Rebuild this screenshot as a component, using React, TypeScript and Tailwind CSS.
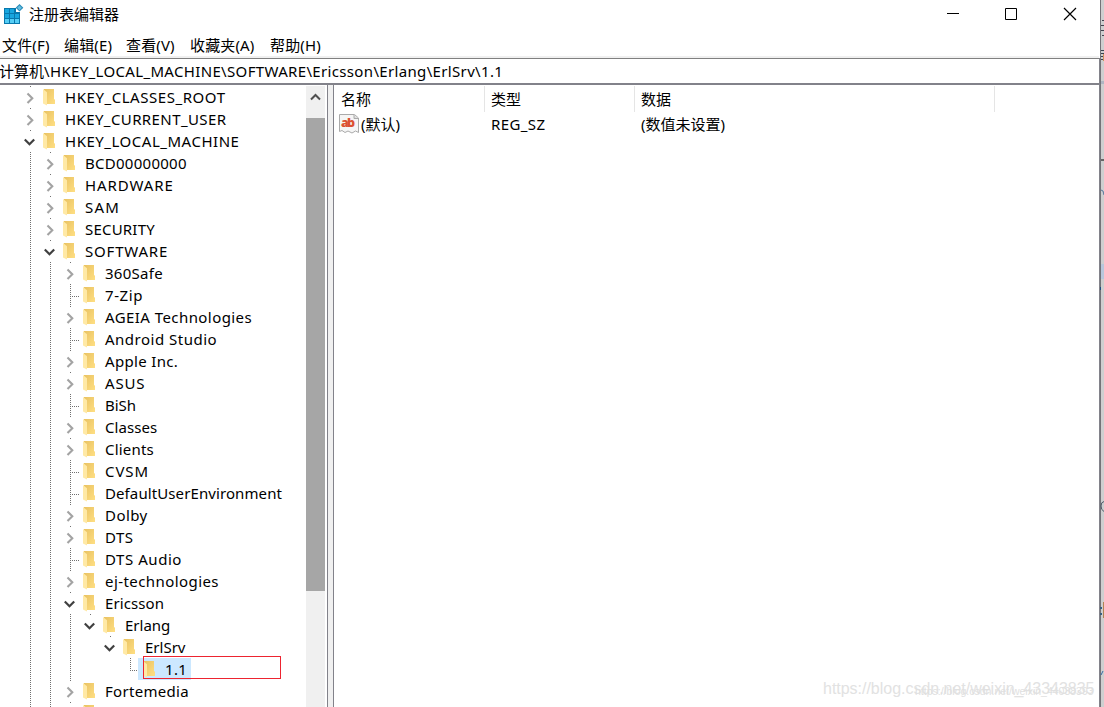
import React from "react";

type Guide = "line" | "none";
type Kind = "closed" | "open" | "leaf" | "last";
type RowData = { name: string; guides: Guide[]; kind: Kind; track?: string; selected?: boolean };

const L1: Guide[] = ["line"];
const L2: Guide[] = ["line", "line"];

const rows: RowData[] = [
  { name: "HKEY_CLASSES_ROOT", guides: [], kind: "closed", track: "tracking-[0.55px]" },
  { name: "HKEY_CURRENT_USER", guides: [], kind: "closed", track: "tracking-[0.4px]" },
  { name: "HKEY_LOCAL_MACHINE", guides: [], kind: "open", track: "tracking-[0.52px]" },
  { name: "BCD00000000", guides: L1, kind: "closed", track: "tracking-[0.27px]" },
  { name: "HARDWARE", guides: L1, kind: "closed", track: "tracking-[0.9px]" },
  { name: "SAM", guides: L1, kind: "closed", track: "tracking-[1.2px]" },
  { name: "SECURITY", guides: L1, kind: "closed", track: "tracking-[0.2px]" },
  { name: "SOFTWARE", guides: L1, kind: "open", track: "tracking-[0.8px]" },
  { name: "360Safe", guides: L2, kind: "closed", track: "tracking-[0.28px]" },
  { name: "7-Zip", guides: L2, kind: "leaf", track: "tracking-[0.6px]" },
  { name: "AGEIA Technologies", guides: L2, kind: "closed", track: "tracking-[0.43px]" },
  { name: "Android Studio", guides: L2, kind: "leaf", track: "tracking-[0.5px]" },
  { name: "Apple Inc.", guides: L2, kind: "closed", track: "tracking-[0.33px]" },
  { name: "ASUS", guides: L2, kind: "closed", track: "tracking-[0.8px]" },
  { name: "BiSh", guides: L2, kind: "leaf" },
  { name: "Classes", guides: L2, kind: "closed", track: "tracking-[0.05px]" },
  { name: "Clients", guides: L2, kind: "closed", track: "tracking-[0.2px]" },
  { name: "CVSM", guides: L2, kind: "leaf", track: "tracking-[0.9px]" },
  { name: "DefaultUserEnvironment", guides: L2, kind: "leaf", track: "tracking-[0.1px]" },
  { name: "Dolby", guides: L2, kind: "closed", track: "tracking-[0.45px]" },
  { name: "DTS", guides: L2, kind: "closed", track: "tracking-[0.5px]" },
  { name: "DTS Audio", guides: L2, kind: "leaf", track: "tracking-[0.55px]" },
  { name: "ej-technologies", guides: L2, kind: "closed", track: "tracking-[0.43px]" },
  { name: "Ericsson", guides: L2, kind: "open", track: "tracking-[0.1px]" },
  { name: "Erlang", guides: ["line", "line", "line"], kind: "open" },
  { name: "ErlSrv", guides: ["line", "line", "line", "none"], kind: "open" },
  { name: "1.1", guides: ["line", "line", "line", "none", "none"], kind: "last", track: "tracking-[0.3px]", selected: true },
  { name: "Fortemedia", guides: L2, kind: "closed", track: "tracking-[0.3px]" },
  { name: "", guides: L2, kind: "closed" },
];

function Cell({ kind, depth }: { kind: Guide | Kind; depth: number }) {
  // The Ericsson subtree keeps only its ancestors' guides.
  const show = !(kind === "line" && depth > 2);
  return (
    <svg className="h-[22px] w-5 shrink-0" viewBox="0 0 20 22" fill="none">
      {show && (kind === "line" || kind === "leaf") && (
        <path d="M10.5 0V22" stroke="#707070" strokeDasharray="1 1" />
      )}
      {kind === "last" && <path d="M10.5 0V13" stroke="#707070" strokeDasharray="1 1" />}
      {(kind === "leaf" || kind === "last") && (
        <path d="M12 12.5H19" stroke="#707070" strokeDasharray="1 1" />
      )}
      {(kind === "closed" || kind === "open") && <path d="M10 .5H11" stroke="#707070" />}
      {kind === "closed" && <path d="M7.5 7.5L12.3 12.3L7.5 17.1" stroke="#a3a3a3" strokeWidth="2.1" />}
      {kind === "open" && <path d="M4.8 9.5L9.5 14.2L14.2 9.5" stroke="#404040" strokeWidth="2.2" />}
    </svg>
  );
}

function Folder() {
  return (
    <svg className="h-[22px] w-[13px] shrink-0" viewBox="0 0 13 22">
      <defs>
        <linearGradient id="folderBack" x1="0" y1="0" x2="1" y2="1">
          <stop offset="0" stopColor="#e9c262" />
          <stop offset="1" stopColor="#ffdf83" />
        </linearGradient>
      </defs>
      <path d="M1 3H11V13.2L12 13.6V18H1Z" fill="url(#folderBack)" />
      <path d="M0 3L4 6.3V19.6L0 17.4Z" fill="#ffe9a6" />
    </svg>
  );
}

function TreeRow({ row }: { row: RowData }) {
  return (
    <div className="flex h-[22px] shrink-0 pl-5">
      {row.guides.map((g, i) => (
        <Cell key={i} kind={g} depth={i} />
      ))}
      <Cell kind={row.kind} depth={row.guides.length} />
      <div className={row.selected ? "-ml-0.5 flex bg-[#cce8ff] pl-[5px] pr-[4px]" : "flex pl-[3px]"}>
        <Folder />
        <span className={`whitespace-pre pl-[9px] leading-[22px] ${row.track ?? "tracking-normal"}`}>{row.name}</span>
      </div>
    </div>
  );
}

function RegistryIcon() {
  return (
    <svg className="h-6 w-6 shrink-0" viewBox="0 0 24 24">
      <path d="M4 8H16V12H20V24H4Z" fill="#0878ad" />
      <path d="M5 9h4v4H5zM10 9h4v4h-4zM5 14h4v4H5zM10 14h4v4h-4zM15 14h4v4h-4z" fill="#18a6df" />
      <path d="M5 19h4v4H5zM10 19h4v4h-4zM15 19h4v4h-4z" fill="#55cdf5" />
      <path d="M19.5 4L23.3 7.8L19.5 11.6L15.7 7.8Z" fill="#2488b7" />
      <path d="M19.5 5.4L21.9 7.8L19.5 10.2L17.1 7.8Z" fill="#65bddf" />
    </svg>
  );
}

function StringIcon() {
  return (
    <svg className="h-5 w-5 shrink-0" viewBox="0 0 20 20">
      <path d="M.5.5H15.5L19.5 4V18.5L16.5 17L13 19L9 17L6 18.5L3 16.5L.5 17.5Z" fill="#f5f5f5" stroke="#aaa" />
      <path d="M15 1V4.5H19" fill="#ddd" stroke="#aaa" />
      <text x="2" y="12.5" fontFamily="Open Sans, sans-serif" fontSize="12.5" fontWeight="800" fill="#dc5131" textLength="14">ab</text>
    </svg>
  );
}

export default function App() {
  return (
    <div className="flex h-[707px] w-[1104px] overflow-hidden bg-white font-['Noto_Sans','Noto_Sans_CJK_SC',sans-serif] text-[15px] text-black">
      <div className="relative flex w-[1099px] shrink-0 flex-col">
        <header className="flex h-[30px] shrink-0 justify-between">
          <div className="flex">
            <RegistryIcon />
            <span className="pl-[5px] leading-[29px]">注册表编辑器</span>
          </div>
          <svg className="h-[30px] w-[152px]" viewBox="0 0 152 30" fill="none" stroke="#000">
            <path d="M0 13.5H12" />
            <path d="M58.5 8.5H69.5V19.5H58.5Z" />
            <path d="M117 8L129 20M129 8L117 20" strokeWidth="1.2" />
          </svg>
        </header>
        <nav className="flex h-[26px] shrink-0 gap-[14px] whitespace-nowrap pl-0.5 leading-[31px] tracking-[0.15px]">
          <span className="w-12">文件(F)</span>
          <span className="w-12">编辑(E)</span>
          <span className="w-[50px]">查看(V)</span>
          <span className="w-[66px]">收藏夹(A)</span>
          <span>帮助(H)</span>
        </nav>
        <div className="flex h-[29px] shrink-0 flex-col border-b-2 border-[#82828a] bg-[#f0f0f0] pt-0.5">
          <div className="h-[25px] border-t border-[#808080] bg-white">
            <div className="-ml-px whitespace-pre leading-[25px]">计算机<span className="tracking-[0.34px]">\HKEY_LOCAL_MACHINE\SOFTWARE\Ericsson\Erlang\ErlSrv\1.1</span></div>
          </div>
        </div>
        <main className="flex min-h-0 flex-1">
          <section className="flex w-[306px] shrink-0 flex-col overflow-hidden pt-px">
            {rows.map((r, i) => (
              <TreeRow key={i} row={r} />
            ))}
          </section>
          <div className="mt-px flex w-[19px] shrink-0 flex-col bg-[#f0f0f0]">
            <svg className="h-8 w-[19px]" viewBox="0 0 19 32" fill="none">
              <path d="M5 13.5L9.5 9L14 13.5" stroke="#505050" strokeWidth="2" />
            </svg>
            <div className="h-[473px] bg-[#a6a6a6]" />
          </div>
          <div className="ml-0.5 w-[7px] shrink-0 border-x border-[#82828a] bg-[#f0f0f0]" />
          <section className="min-w-0 flex-1 pt-px">
            <div className="flex h-[26px] leading-[27px]">
              <div className="w-[151px] border-r border-[#e5e5e5] pl-[7px]">名称</div>
              <div className="w-[150px] border-r border-[#e5e5e5] pl-1.5">类型</div>
              <div className="w-[360px] border-r border-[#e5e5e5] pl-1.5">数据</div>
            </div>
            <div className="flex h-[26px] leading-[25px]">
              <div className="flex w-[157px] items-start pl-[5px] pt-0.5">
                <StringIcon />
                <span className="-mt-0.5 pl-0.5">(默认)</span>
              </div>
              <div className="w-[150px] tracking-[0.4px]">REG_SZ</div>
              <div>(数值未设置)</div>
            </div>
          </section>
        </main>
        <div className="absolute left-[143px] top-[656px] h-[23px] w-[138px] border border-[#ed2430]" />
        <div className="absolute left-[823px] top-[677px] whitespace-nowrap font-['Liberation_Sans',sans-serif] text-[16px] leading-6 tracking-[-0.02px] text-[#e2e2e2]">https://blog.csdn.net/weixin_43343835</div>
        <div className="absolute left-[915px] top-[681px] whitespace-nowrap font-['Liberation_Sans',sans-serif] text-[10.5px] leading-5 text-[#e0e0e0]">https://blog.csdn.net/weixin_44038393</div>
      </div>
      <svg className="h-[707px] w-[5px] shrink-0" viewBox="0 0 5 707">
        <path d="M1 0H5V707H1Z" fill="#cecfd0" />
        <path d="M0 58H1V707H0Z" fill="#82828a" />
        <path d="M1 0H2V707H1Z" fill="#737378" />
        <path d="M3 20H5V21H3ZM2 25H5V26H2ZM2 30H5V31H2ZM3 35H5V36H3Z" fill="#44444f" />
        <path d="M2 50H5V51H2ZM2 53H5V54H2ZM2 56H5V57H2ZM2 59H5V60H2Z" fill="#39414f" />
        <path d="M4 54H5V61H4Z" fill="#cf905b" />
        <path d="M2 81H5V84H2Z" fill="#afb6c3" />
        <path d="M2 159H5V161H2Z" fill="#666" />
        <path d="M2 190L4 191L5 195" fill="none" stroke="#56779c" />
        <path d="M2 264H5V279H2Z" fill="#b8c7dc" />
        <path d="M1 287H2V290H1Z" fill="#214e80" />
        <path d="M5 501.5Q2 502 2 506T5 511.5" fill="none" stroke="#4c5968" />
        <path d="M1 607H3V609H1ZM1 613H3V615H1Z" fill="#386080" />
        <path d="M4 602H5V618H4Z" fill="#b28353" />
        <path d="M4 671L2 675" stroke="#336ba4" />
      </svg>
    </div>
  );
}
